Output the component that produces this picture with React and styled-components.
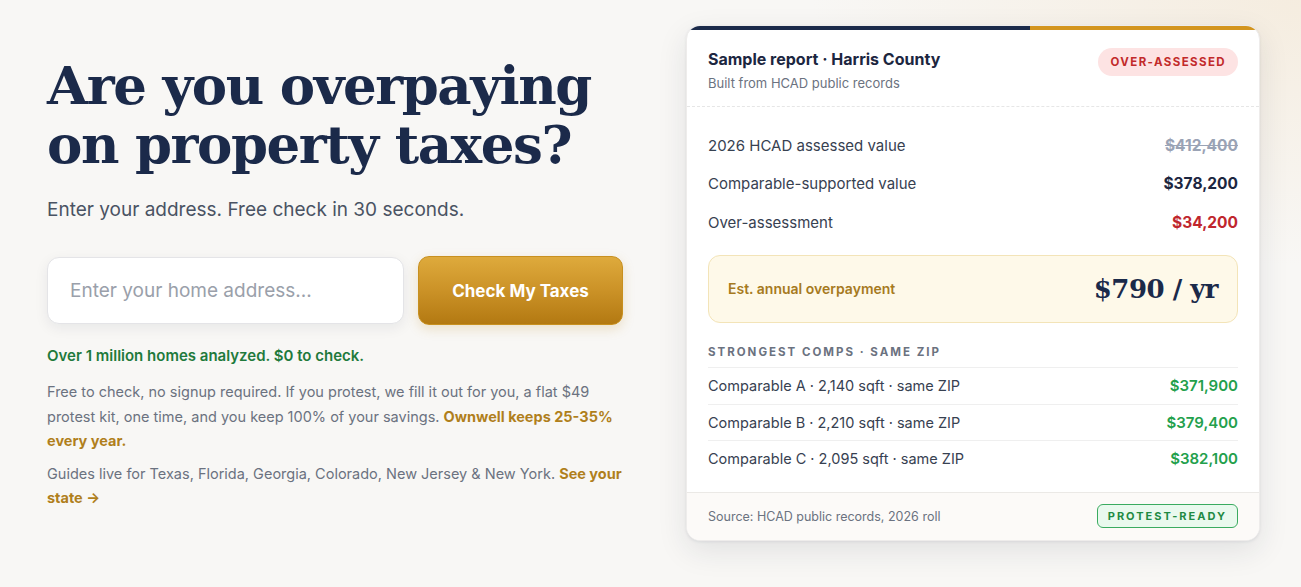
import React from "react";
import styled, { createGlobalStyle } from "styled-components";

const GlobalStyle = createGlobalStyle`
  * { box-sizing: border-box; }
  html, body { margin: 0; padding: 0; }
  body {
    font-family: Inter, "Noto Sans", "Liberation Sans", sans-serif;
    background: #f8f7f5;
    color: #1b2a4a;
  }
`;

const Page = styled.div`
  min-height: 587px;
  background:
    radial-gradient(ellipse 700px 380px at 100% 0%, rgba(244, 233, 216, 0.75), rgba(248, 247, 245, 0) 70%),
    #f8f7f5;
  padding: 26px 42px 40px 47px;
`;

const Hero = styled.div`
  display: grid;
  grid-template-columns: 576px 574px;
  column-gap: 63px;
  align-items: start;
`;

const Left = styled.div`
  display: flex;
  flex-direction: column;
  padding-top: 30px;
`;

const Title = styled.h1`
  margin: 0;
  font-family: "DejaVu Serif", "Liberation Serif", serif;
  font-weight: 700;
  font-size: 53px;
  line-height: 59px;
  letter-spacing: -1.45px;
  color: #1b2a4a;
`;

const Lead = styled.p`
  margin: 23px 0 0;
  font-size: 19px;
  line-height: 26px;
  color: #4a5363;
`;

const Form = styled.form`
  display: flex;
  gap: 14px;
  margin-top: 34px;
`;

const AddressInput = styled.input`
  width: 357px;
  height: 67px;
  border: 1px solid #e4e4e7;
  border-radius: 12px;
  background: #fff;
  padding: 0 22px;
  font-family: inherit;
  font-size: 19px;
  color: #1b2a4a;
  box-shadow: 0 4px 14px rgba(20, 30, 50, 0.07);
  outline: none;
  &::placeholder { color: #9aa0aa; }
`;

const CheckButton = styled.button`
  width: 205px;
  height: 69px;
  margin-top: -1px;
  border: 1px solid #c8901f;
  border-radius: 11px;
  background: linear-gradient(180deg, #deaa3c 0%, #cb9227 50%, #b37912 100%);
  color: #fff;
  font-family: inherit;
  font-size: 17px;
  font-weight: 700;
  box-shadow: 0 4px 12px rgba(190, 140, 40, 0.22);
  cursor: pointer;
`;

const Proof = styled.p`
  margin: 21px 0 0;
  font-size: 15px;
  font-weight: 600;
  color: #1f7a3c;
`;

const Fine = styled.p`
  margin: ${(p) => p.$top}px 0 0;
  font-size: 14.5px;
  line-height: 24.5px;
  color: #6b7280;
`;

const Gold = styled.a`
  color: #b07f1c;
  font-weight: 700;
  text-decoration: none;
`;

const Card = styled.section`
  background: #fff;
  border-radius: 14px;
  overflow: hidden;
  margin-top: -1px;
  box-shadow: 0 10px 30px rgba(30, 40, 60, 0.10), 0 1px 3px rgba(30, 40, 60, 0.08);
  border: 1px solid #eeeceb;
`;

const TopBar = styled.div`
  height: 4px;
  background: linear-gradient(90deg, #1b2a4a 0%, #1b2a4a 60%, #d3951f 60%, #d3951f 100%);
`;

const CardHead = styled.div`
  display: flex;
  justify-content: space-between;
  align-items: flex-start;
  padding: 17px 21px 15px;
  border-bottom: 1px dashed #e6e6e6;
`;

const HeadText = styled.div`
  display: flex;
  flex-direction: column;
  gap: 4px;
`;

const CardTitle = styled.h2`
  margin: 0;
  font-size: 16px;
  line-height: 24px;
  font-weight: 700;
  color: #1c2640;
`;

const CardSub = styled.span`
  font-size: 13px;
  color: #6b7280;
`;

const Pill = styled.span`
  display: inline-flex;
  align-items: center;
  height: 28px;
  padding: 0 12px;
  margin-top: 1px;
  border-radius: 14px;
  background: #fde3e3;
  color: #c22a2a;
  font-size: 11.5px;
  font-weight: 700;
  letter-spacing: 1.4px;
`;

const CardBody = styled.div`
  padding: 19px 21px 16px;
`;

const Row = styled.div`
  display: flex;
  justify-content: space-between;
  align-items: center;
  height: 38.5px;
  font-size: 15px;
  color: #374151;
`;

const Value = styled.span`
  font-weight: 700;
  font-size: 15.5px;
  color: ${(p) => p.$color};
  text-decoration: ${(p) => (p.$struck ? "line-through" : "none")};
`;

const Callout = styled.div`
  display: flex;
  justify-content: space-between;
  align-items: center;
  height: 68px;
  margin-top: 13px;
  padding: 0 19px 0 19px;
  background: #fef9e9;
  border: 1px solid #f3e4b8;
  border-radius: 12px;
`;

const CalloutLabel = styled.span`
  font-size: 14px;
  font-weight: 600;
  color: #a67a1e;
`;

const CalloutValue = styled.span`
  font-family: "DejaVu Serif", "Liberation Serif", serif;
  font-size: 26px;
  font-weight: 700;
  letter-spacing: -0.5px;
  color: #1b2a4a;
`;

const SectionLabel = styled.h3`
  margin: 22px 0 0;
  padding-bottom: 8px;
  font-size: 11.5px;
  font-weight: 700;
  letter-spacing: 2px;
  color: #6b7280;
  text-transform: uppercase;
  border-bottom: 1px solid #efefef;
`;

const CompRow = styled.div`
  display: flex;
  justify-content: space-between;
  align-items: center;
  height: 36px;
  font-size: 14.5px;
  color: #374151;
  & + & { border-top: 1px solid #efefef; }
`;

const CompValue = styled.span`
  font-weight: 600;
  font-size: 15px;
  color: #23a04c;
`;

const CardFoot = styled.div`
  display: flex;
  justify-content: space-between;
  align-items: center;
  height: 48px;
  padding: 0 21px;
  background: #fcfaf8;
  border-top: 1px solid #ebe9e6;
`;

const Source = styled.span`
  font-size: 12.5px;
  color: #6b7280;
`;

const ReadyTag = styled.span`
  display: inline-flex;
  align-items: center;
  height: 24px;
  padding: 0 10px;
  border: 1px solid #3aab60;
  border-radius: 6px;
  background: #e9f9ee;
  color: #1f8a43;
  font-size: 11px;
  font-weight: 700;
  letter-spacing: 2px;
`;

const rows = [
  { label: "2026 HCAD assessed value", value: "$412,400", color: "#9aa3b5", struck: true },
  { label: "Comparable-supported value", value: "$378,200", color: "#1c2640" },
  { label: "Over-assessment", value: "$34,200", color: "#c0262d" },
];

const comps = [
  { label: "Comparable A · 2,140 sqft · same ZIP", value: "$371,900" },
  { label: "Comparable B · 2,210 sqft · same ZIP", value: "$379,400" },
  { label: "Comparable C · 2,095 sqft · same ZIP", value: "$382,100" },
];

export default function App() {
  return (
    <>
      <GlobalStyle />
      <Page>
        <Hero>
          <Left>
            <Title>
              Are you overpaying
              <br />
              on property taxes?
            </Title>
            <Lead>Enter your address. Free check in 30 seconds.</Lead>
            <Form onSubmit={(e) => e.preventDefault()}>
              <AddressInput placeholder="Enter your home address..." />
              <CheckButton type="submit">Check My Taxes</CheckButton>
            </Form>
            <Proof>Over 1 million homes analyzed. $0 to check.</Proof>
            <Fine $top={15}>
              Free to check, no signup required. If you protest, we fill it out for you, a flat $49
              protest kit, one time, and you keep 100% of your savings.{" "}
              <Gold href="#">Ownwell keeps 25-35% every year.</Gold>
            </Fine>
            <Fine $top={8}>
              Guides live for Texas, Florida, Georgia, Colorado, New Jersey &amp; New York.{" "}
              <Gold href="#">See your state →</Gold>
            </Fine>
          </Left>

          <Card>
            <TopBar />
            <CardHead>
              <HeadText>
                <CardTitle>Sample report · Harris County</CardTitle>
                <CardSub>Built from HCAD public records</CardSub>
              </HeadText>
              <Pill>OVER-ASSESSED</Pill>
            </CardHead>
            <CardBody>
              {rows.map((r) => (
                <Row key={r.label}>
                  <span>{r.label}</span>
                  <Value $color={r.color} $struck={r.struck}>
                    {r.value}
                  </Value>
                </Row>
              ))}
              <Callout>
                <CalloutLabel>Est. annual overpayment</CalloutLabel>
                <CalloutValue>$790 / yr</CalloutValue>
              </Callout>
              <SectionLabel>Strongest comps · same ZIP</SectionLabel>
              {comps.map((c) => (
                <CompRow key={c.label}>
                  <span>{c.label}</span>
                  <CompValue>{c.value}</CompValue>
                </CompRow>
              ))}
            </CardBody>
            <CardFoot>
              <Source>Source: HCAD public records, 2026 roll</Source>
              <ReadyTag>PROTEST-READY</ReadyTag>
            </CardFoot>
          </Card>
        </Hero>
      </Page>
    </>
  );
}
